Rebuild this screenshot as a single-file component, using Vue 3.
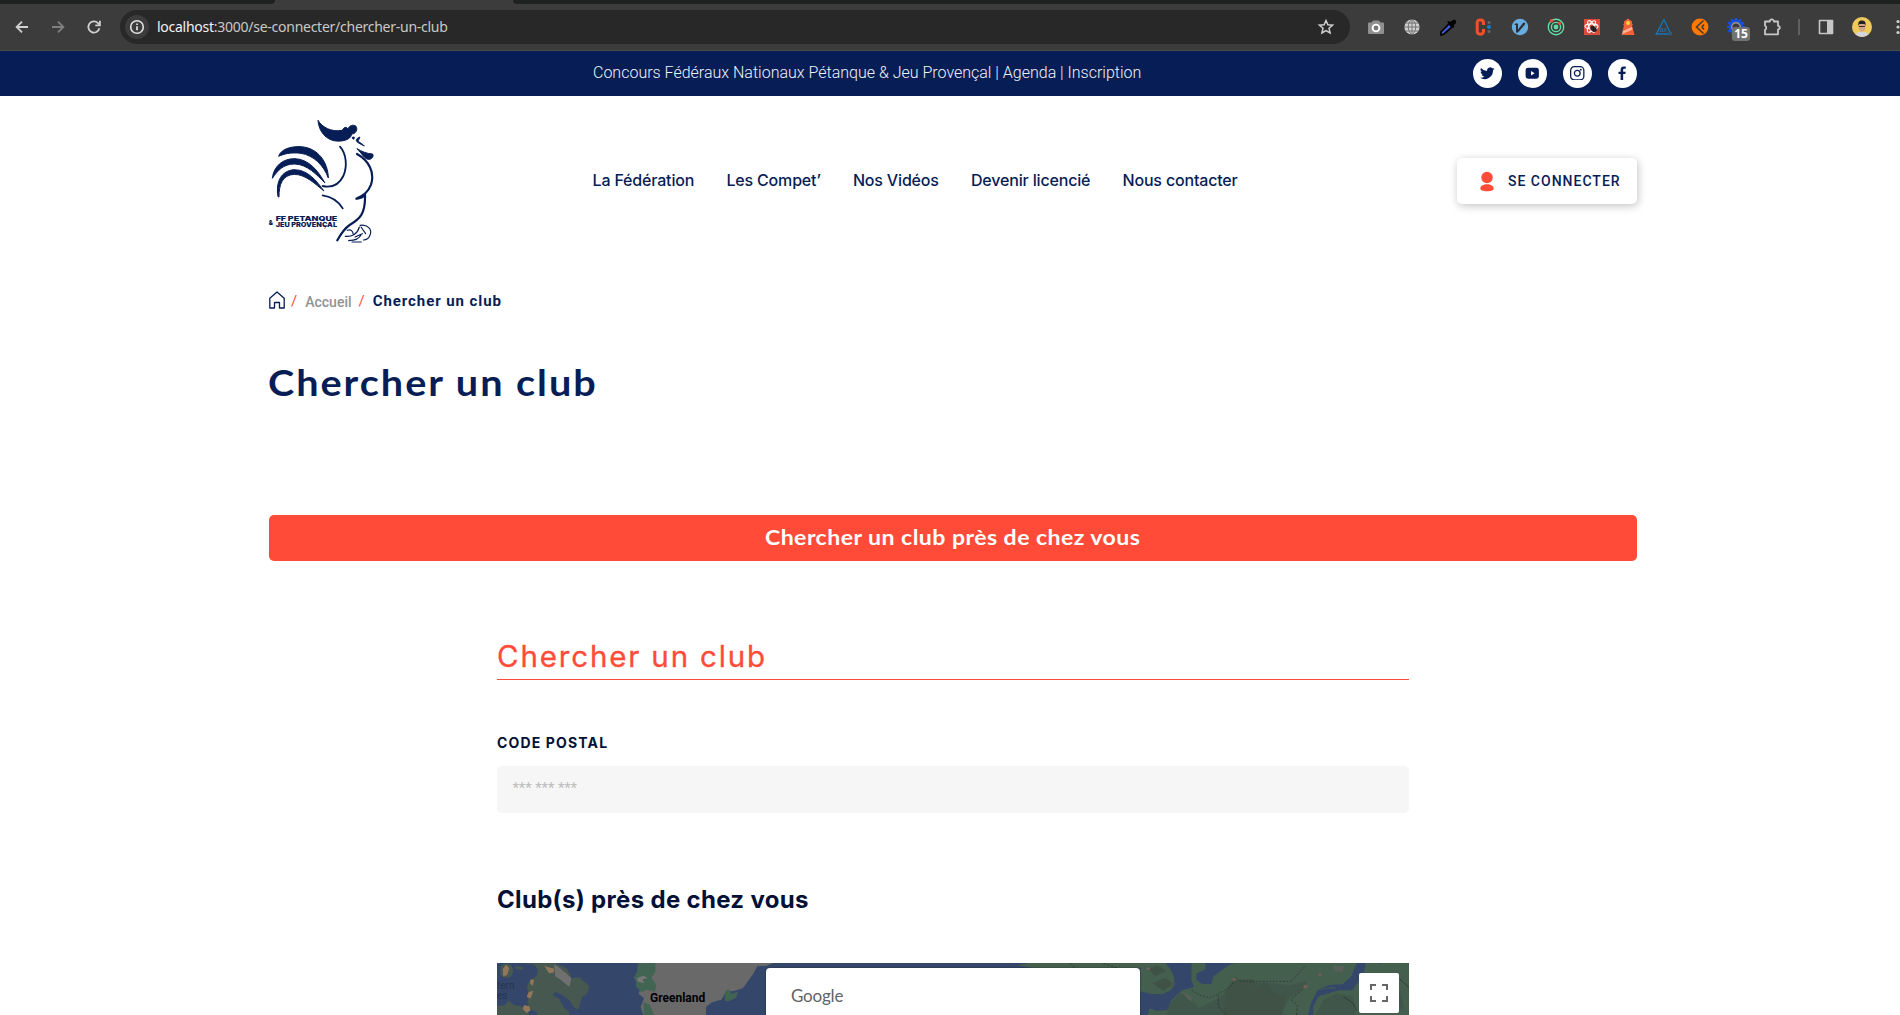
<script setup>
const nav = ['La Fédération', 'Les Compet’', 'Nos Vidéos', 'Devenir licencié', 'Nous contacter']
const teeth = Array.from({ length: 12 }, (_, i) => i * 30)
</script>

<template>
  <div class="window">
    <div class="chrome">
      <div class="tabs"><span class="strip left"></span><span class="strip right"></span></div>
      <div class="toolbar">
        <div class="navs">
          <svg width="16" height="16" viewBox="0 0 16 16" class="line"><path d="M14 8H3M8 2.6 2.6 8 8 13.4" /></svg>
          <svg width="16" height="16" viewBox="0 0 16 16" class="line dim"><path d="M2 8h11M8 2.6 13.4 8 8 13.4" /></svg>
          <svg width="16" height="16" viewBox="0 0 16 16" class="line"><path d="M13.4 9.2A5.6 5.6 0 1 1 12 4.1l1.6 1.6" /><path d="M13.9 1.8v4.6H9.3" /></svg>
        </div>
        <div class="omnibox">
          <span class="info">
            <svg width="16" height="16" viewBox="0 0 16 16"><circle cx="8" cy="8" r="6.3" fill="none" stroke="#e3e3e3" stroke-width="1.6" /><path d="M8 7.3v4M8 4.4v1.6" stroke="#e3e3e3" stroke-width="1.7" /></svg>
          </span>
          <span class="url"><b>localhost</b>:3000/se-connecter/chercher-un-club</span>
          <svg class="star" width="18" height="18" viewBox="0 0 18 18"><path d="m9 2.500 1.900 4.300 4.700.4-3.600 3.100 1.100 4.600L9 12.500l-4.100 2.400L6 10.300 2.400 7.200l4.700-.4z" fill="none" stroke="#d0d0d0" stroke-width="1.500" stroke-linejoin="miter" /></svg>
        </div>
        <div class="extensions">
          <svg viewBox="0 0 18 18"><path d="M2 4.500h2.500L6 2.500h6l1.500 2H16a1 1 0 0 1 1 1V15a1 1 0 0 1-1 1H2a1 1 0 0 1-1-1V5.500a1 1 0 0 1 1-1z" fill="#909090" /><circle cx="9" cy="10" r="3.400" fill="#777" stroke="#fff" stroke-width="1.900" /></svg>
          <svg viewBox="0 0 18 18"><circle cx="9" cy="9" r="7.600" fill="#cfcfcf" /><path d="M9 1v16M1 9h16M2.500 5h13M2.500 13h13M9 1.200c-5 4-5 11.600 0 15.600M9 1.200c5 4 5 11.600 0 15.600" fill="none" stroke="#606060" stroke-width=".8" /></svg>
          <svg viewBox="0 0 18 18"><path d="M2 17v-3L10 6l3 3-8 7z" fill="#405ce0" stroke="#000" stroke-width="1.700" /><path d="m8 4 6 6 1.500-1.500-1-1L17 5c1-2.500-1.500-4-3-3l-3 2-1-1z" /></svg>
          <svg viewBox="0 0 18 18"><path d="M8.500 7V4.500C8.500 1 2.200 1 2.200 4.500v9c0 3.500 6.300 3.500 6.300 0V11" fill="none" stroke="#f25026" stroke-width="3" /><circle cx="14" cy="4.500" r="1.500" fill="#666" /><circle cx="14" cy="9" r="2" fill="#157cca" /><circle cx="14" cy="13.500" r="1.500" fill="#666" /></svg>
          <svg viewBox="0 0 18 18"><circle cx="9" cy="9" r="8.200" fill="#68aee0" /><path d="M4 5.500h3v6l5-6.500c2-1.500 3 .5 1.500 2L7 14.500H5V7H3.500z" fill="#303030" /></svg>
          <svg viewBox="0 0 18 18"><g fill="none" stroke="#61dca3" stroke-width="1.400"><circle cx="9" cy="9" r="7.700" /><circle cx="9" cy="9" r="4.600" /></g><circle cx="9" cy="9" r="2.400" fill="#61dca3" /><circle cx="4.500" cy="2.800" r="1.800" fill="#f25026" /><circle cx="12.500" cy="5.200" r="1.500" fill="#f25026" /></svg>
          <svg viewBox="0 0 18 18"><path d="M1 1h16v16H1z" fill="#dd4b39" /><g fill="none" stroke="#fff" stroke-width="1.100"><ellipse cx="8.500" cy="8.500" rx="6.500" ry="2.600" /><ellipse cx="8.500" cy="8.500" rx="6.500" ry="2.600" transform="rotate(60 8.500 8.500)" /><ellipse cx="8.500" cy="8.500" rx="6.500" ry="2.600" transform="rotate(120 8.500 8.500)" /></g><ellipse cx="10.500" cy="11" rx="2.600" ry="3.600" fill="#222" transform="rotate(-45 10.500 11)" /></svg>
          <svg viewBox="0 0 18 18"><path d="M5 5.500V3.500L9 .5l4 3v2l1 1-1 1 2.500 9.500h-13L5 7.500l-1-1z" fill="#f4623a" /><path d="m4 13 9-4 .5 2.500L3.500 16z" fill="#ffb49c" /><circle cx="9" cy="5" r="1.900" fill="#ffd83d" /></svg>
          <svg viewBox="0 0 18 18"><path d="m9 1.500 6 13M9 1.500 1.200 16h12.500" fill="none" stroke="#1776b8" stroke-width="1.300" /><circle cx="15.500" cy="15.500" r="1.300" fill="none" stroke="#1776b8" /><text x="4.700" y="13.500" class="axe">ax</text></svg>
          <svg viewBox="0 0 18 18"><circle cx="9" cy="9" r="8.400" fill="#ff7800" /><path d="M12.500 2.500 5.500 9l7 6.500M13 6.500 11 9l2 2.500" fill="none" stroke="#3c3c3c" stroke-width="1.500" /></svg>
          <span class="gear">
            <svg viewBox="0 0 18 18"><rect v-for="a in teeth" :key="a" x="7.900" y="0" width="2.200" height="3" fill="#1450f0" :transform="`rotate(${a} 9 9)`" /><circle cx="9" cy="9" r="6.300" fill="none" stroke="#1450f0" stroke-width="2" /><circle cx="9" cy="9" r="4.300" fill="#3c3c3c" stroke="#9a9a9a" stroke-width="1.400" /></svg>
            <em>15</em>
          </span>
          <svg viewBox="0 0 18 18"><path d="M2 3.500h4.800a2.100 2.100 0 0 1 4.200 0h4v4.300a1.700 1.700 0 0 1 0 3.600v4.900H2v-4.500a2.200 2.200 0 0 0 0-4z" fill="none" stroke="#c7c7c7" stroke-width="1.800" stroke-linejoin="round" /></svg>
          <i class="sep"></i>
          <svg viewBox="0 0 18 18"><path d="M2.500 2.500h13v13h-13z" fill="none" stroke="#c7c7c7" stroke-width="1.600" stroke-linejoin="round" /><path d="M10 2h6v14h-6z" fill="#c7c7c7" /></svg>
          <svg class="avatar" viewBox="0 0 20 20"><circle cx="10" cy="10" r="10" fill="#efc959" /><path d="M3.500 17.600c1-2.600 4-3.200 6.500-3.200s5.500.6 6.500 3.200a10 10 0 0 1-13 0z" fill="#d5d5da" /><ellipse cx="10" cy="10" rx="3.300" ry="4.600" fill="#d9a483" /><path d="M6.500 9c-.8-4.500 1-5.800 3.700-5.600C13.500 3.500 14 6 13.400 9l-.8-2H7.300z" fill="#222" /><path d="M7 9.500h6" stroke="#333" /></svg>
          <svg viewBox="0 0 18 18"><g fill="#d0d0d0"><circle cx="9" cy="3.500" r="1.600" /><circle cx="9" cy="9" r="1.600" /><circle cx="9" cy="14.500" r="1.600" /></g></svg>
        </div>
      </div>
    </div>

    <div class="topbar">
      <p>Concours Fédéraux Nationaux Pétanque &amp; Jeu Provençal | Agenda | Inscription</p>
      <div class="social">
        <a><svg viewBox="0 0 24 24"><path d="M24 4.600a9.800 9.800 0 0 1-2.800.8 5 5 0 0 0 2.200-2.700c-1 .6-2 1-3.100 1.200a4.900 4.900 0 0 0-8.400 4.500A14 14 0 0 1 1.700 3.200a4.900 4.900 0 0 0 1.500 6.500 4.900 4.900 0 0 1-2.200-.6c0 2.300 1.600 4.400 3.900 4.900a5 5 0 0 1-2.200.1 4.900 4.900 0 0 0 4.600 3.400A9.900 9.900 0 0 1 0 19.500 14 14 0 0 0 21.500 7.100c1-.7 1.800-1.500 2.500-2.500z" /></svg></a>
        <a><svg viewBox="0 0 24 24"><path fill-rule="evenodd" d="M5 3h14a4 4 0 0 1 4 4v10a4 4 0 0 1-4 4H5a4 4 0 0 1-4-4V7a4 4 0 0 1 4-4zm5 5.200v7.600l6-3.800z" /></svg></a>
        <a><svg viewBox="0 0 24 24"><g fill="none" stroke="#071d55" stroke-width="2.100"><rect x="1.100" y="1.100" width="21.800" height="21.800" rx="6" /><circle cx="12" cy="12" r="4.700" /></g><circle cx="18" cy="6" r="1.500" /></svg></a>
        <a><svg viewBox="0 0 24 24"><path d="M9.300 23v-9.800H5.800V9.500h3.500V6.300C9.300 2.800 11.300 1 14.500 1h3.300v3.700h-2.200c-1.600 0-2.100.8-2.100 2.100v2.700h4.200l-.6 3.700h-3.600V23z" /></svg></a>
      </div>
    </div>

    <header class="header">
      <svg class="logo" viewBox="39 39 321 378">
        <g fill="#071d55" stroke="#071d55" stroke-width="3" stroke-linejoin="round">
          <path d="M189 46c12 20 38 36 73 30 4-10 13-12 17-4 3-10 16-15 24-8 6 9 0 23-13 23-2 13-15 19-32 21-40 4-66-24-69-62z" />
          <path d="M295 96a3 3 0 1 0 .1 0zM314 96c-11 5-13 11-6 16s14 8 20 11c-8-9-20-12-18-17 2-4 5-6 4-10z" />
          <path d="M306 131c14 8 28 15 47 16 4 8-3 16-11 16-14 0-18-14-36-32z" />
          <path d="M71 154c6-20 34-31 68-29 50 4 80 46 81 94-14-38-44-68-82-74-32-4-52 2-67 9z" />
          <path d="M52 220c4-37 32-60 68-59 42 2 69 36 90 73-24-24-53-56-91-57-35 0-51 20-67 43z" />
          <path d="M69 275c-8-48 12-78 48-81 42 0 68 34 90 64-26-20-53-49-89-50-36 2-46 30-46 68z" />
        </g>
        <g fill="none" stroke="#071d55" stroke-linecap="round">
          <path d="M255 125c20 22 22 60 10 88-12 24-34 36-62 30M203 271c25 4 48 18 60 39" stroke-width="5.500" />
          <path d="M306 147c36 20 54 56 42 92-8 22-22 32-46 43 14-2 24-4 28-14 2 60-16 74-46 92-18 12-26 26-37 46" stroke-width="6.500" />
          <path d="M315 361c22-4 38 12 30 30-4 10-12 14-20 14M277 376c8-4 16 0 18 12M271 394c20 2 37-8 42-28M281 407c14 0 32-5 38-19M291 411h28M300 396l22-10M318 366l14 20" stroke-width="3.500" />
        </g>
        <text x="62" y="348" textLength="185" lengthAdjust="spacingAndGlyphs" class="lt">FF PETANQUE</text>
        <text x="41" y="359" class="amp">&amp;</text>
        <text x="62" y="367" textLength="184" lengthAdjust="spacingAndGlyphs" class="lt">JEU PROVENÇAL</text>
      </svg>
      <nav><a v-for="n in nav" :key="n">{{ n }}</a></nav>
      <button class="login">
        <svg width="14" height="21" viewBox="0 0 14 21"><circle cx="7" cy="6.500" r="5.700" fill="#ff4b37" /><path d="M.3 17.300c0-2.200 3-4 6.700-4s6.700 1.800 6.700 4-3 3-6.700 3-6.700-.8-6.700-3z" fill="#ff4b37" /></svg>
        SE CONNECTER
      </button>
    </header>

    <main>
      <div class="breadcrumb">
        <svg width="16" height="18" viewBox="0 0 16 18"><path d="M.8 17V7.200L8 .9l7.200 6.300V17h-4.700v-5.500h-5V17z" fill="none" stroke="#071d55" stroke-width="1.300" stroke-linejoin="round" /></svg>
        <i>/</i><a>Accueil</a><i>/</i><strong>Chercher un club</strong>
      </div>
      <h1><span>Chercher un club</span></h1>
      <div class="banner"><span>Chercher un club près de chez vous</span></div>

      <section class="form">
        <h2>Chercher un club</h2>
        <label>CODE POSTAL</label>
        <div class="field">*** *** ***</div>
        <h3>Club(s) près de chez vous</h3>
        <div class="map">
          <svg width="912" height="52" viewBox="0 0 912 52">
            <path d="M0 0h912v52H0z" fill="#34476a" />
            <g transform="scale(.33333) translate(-51 -279)">
              <g fill="#46584f">
                <path d="M62 290c8-12 22-10 32-4 8 12 6 28-4 36-12 4-26 0-30-14zM105 288l24 4-2 8-20-4z" />
                <path d="M133 279h92l35 16 15 30 22-4 32 28-8 22-15 10-6 24-6 14-14-8-10-18-24-18-20-10-8 10 20 12 14 26 16 14-2 22h-86l-10-22-24-12-4-18 6-24-8-22 10-20 20-14 4-18-10-14-14-4z" />
                <path d="M51 409l24-4 10-14 18 14 40 8 4 22H51z" />
              </g>
              <g fill="#92765a"><path d="M68 298l10-14 10 10-6 20-12 6zM193 288l30 8-2 12-14 2zM152 328l10 2-4 18-8-8zM146 366l14-4-8 24-12-6zM132 405l16 4 4 12-12 8-12-12z" /></g>
              <path d="M222 283l16 10 24 20 12 12-6 26-24-20-18-12-2-20z" fill="#707070" />
              <path d="M490 279h390l-20 8-28 2-12 22-20 28-12 16-26 8-24 2-14 24-28 8-18 14v24H490l-8-24 10-26-16-14 14-40z" fill="#696969" />
              <path d="M474 279h52v28l-12 16 15 22-4 20-24-6-16 8-18-18 2-12-8-14 10-16zM735 365l10-8 10 14 18-6-4 18-22 10h-12zM491 396l18 8 14 31h-32z" fill="#426553" />
              <path d="m470 325 20-8 14 8-16 2 4 12-18-4z" fill="#777" />
            </g>
            <g transform="translate(443 0) scale(.33333) translate(0 -69)">
              <path d="M232 76l34-7h410l16 20 10 22 2 22-12 18-24 12-35-1-32-8V84H280z" fill="#455f4f" />
              <path d="M755 69h40l2 18-28 14 0 18 16 12 28 2 8-24 40-30 20-10h369l-6 42-24 22-4 18-40-6-42 4-20 38-10 38H624l4-20 24 8 34-4 6-26 34-32 36-10-8-20z" fill="#455f4f" />
              <path d="M1276 69h40v34l-40-6zM1324 69h83v156h-287v-26l16-30 46-14 46-14 30-50z" fill="#455f4f" />
              <path d="M682 202l34-40 30 2 30 40 62-30 50-52 94 6 70 8 50-14-10 22-42 30-30 51H682zM1150 180l40-20 50 10 6 55h-120zM1320 140l60 14 12 50-40 14-40-6z" fill="#40554a" opacity=".85" />
              <path d="m860 145 20-24 60-4 8 32 28-26 30 40 32 4-12 58H850zM624 86l30-10 24 18-32 14zM636 130l40-16 24 18-30 20z" fill="#3f5245" />
              <path d="M1250 69h24l-2 36-18 22-18 24-40 0-16-10-42 6 30-12 40-2 26-24z" fill="#34476a" />
              <g fill="none" stroke="#2b382f" stroke-width="2.500"><path d="M755 150l24 16 30 8 60-30 20-32 10 12h155l40-44" stroke-dasharray="5 5" /><path d="M835 165v34l24 26M1070 225l2-30-20-16 42-36M390 69l14 14M490 70l40 14" stroke-dasharray="7 5" /><path d="M1210 170l30 20 10 22M1378 115l29 28" /></g>
              <g fill="#775f58"><path d="M620 83h10v6h-10zM878 115h9v7h-9zM1136 101h8v8h-8zM1092 135l12 2-4 9-10-2z" /></g>
              <path d="M725 155l24 10 10 20-16-8zM1180 77l32 2-4 18-26-4z" fill="#59605a" />
            </g>
          </svg>
          <span class="region"><span>tern</span><span>es</span></span>
          <span class="country">Greenland</span>
          <div class="dialog">Google</div>
          <div class="fullscreen"><svg width="18" height="18" viewBox="0 0 18 18"><path d="M1 6V1h5M12 1h5v5M17 12v5h-5M6 17H1v-5" fill="none" stroke="#666" stroke-width="2" /></svg></div>
        </div>
      </section>
    </main>
  </div>
</template>

<style>
body { background: #fff; overflow: hidden; }
</style>

<style scoped>
.window { width: 1900px; height: 1015px; overflow: hidden; font-family: Roboto, sans-serif; color: #071d55; }
.chrome { height: 50px; background: #3c3c3c; border-bottom: 1px solid #494b46; overflow: hidden; }
.tabs { height: 4px; display: flex; justify-content: space-between; }
.strip { background: #1f2120; }
.strip.left { width: 275px; border-radius: 0 0 6px 0; }
.strip.right { width: 1387px; border-radius: 0 0 0 6px; }
.toolbar { height: 46px; display: flex; align-items: center; }
.navs { flex: none; width: 106px; padding-left: 14px; display: flex; gap: 20px; }
.line { fill: none; stroke: #d0d0d0; stroke-width: 1.800; }
.dim { stroke: #808080; }
.omnibox { flex: none; width: 1230px; height: 34px; border-radius: 17px; background: #282828; display: flex; align-items: center; }
.info { width: 24px; height: 24px; margin-left: 5px; border-radius: 50%; background: #3c3c3c; display: flex; align-items: center; justify-content: center; }
.url { margin-left: 8px; padding-bottom: 2px; font: 14px 'Noto Sans', sans-serif; letter-spacing: -.26px; color: #c8c8c8; }
.url b { font-weight: 400; color: #f2f2f2; }
.star { margin-left: auto; margin-right: 15px; }
.extensions { flex: none; margin-left: 17px; display: flex; align-items: center; gap: 18px; }
.extensions svg { flex: none; width: 18px; height: 18px; display: block; }
.extensions .avatar { width: 20px; height: 20px; margin: 0 -1px; }
.axe { font: 7px 'Liberation Sans', sans-serif; fill: #1776b8; }
.sep { width: 2px; height: 16px; margin: 0 -1px 0 -1px; background: #606060; }
.gear { position: relative; }
.gear em { position: absolute; left: 5px; top: 9px; width: 18px; height: 14px; border-radius: 3px; background: #717473; color: #fff; font: 700 12px/14px 'Noto Sans', sans-serif; text-align: center; }
.topbar { height: 45px; background: #071d55; display: flex; align-items: center; }
.topbar p { width: 880px; margin: 0 0 0 593px; font-weight: 300; font-size: 16px; line-height: 20px; color: #f1f3f8; padding-bottom: 1px; }
.social { display: flex; gap: 16px; }
.social a { width: 29px; height: 29px; border-radius: 50%; background: #fff; display: flex; align-items: center; justify-content: center; }
.social svg { width: 14.500px; height: 14.500px; fill: #071d55; margin-bottom: 1px; }
.header { height: 170px; margin-left: 268px; width: 1369px; display: flex; align-items: center; }
.logo { width: 107px; height: 126px; }
.lt { font: 900 19px Inter, sans-serif; fill: #071d55; }
.amp { font: 900 18px Inter, sans-serif; fill: #071d55; }
nav { margin-left: 217.500px; display: flex; gap: 32.200px; font: 500 16px/20px Inter, sans-serif; letter-spacing: -.17px; padding-bottom: 3px; }
.login { margin: 0 0 0 auto; width: 180px; height: 46px; padding: 0 16px 0 23px; border: 0; border-radius: 5px; background: #fff; box-shadow: 1px 2px 8px rgba(0,0,0,.24); display: flex; align-items: center; gap: 14px; font: 500 14px Roboto, sans-serif; letter-spacing: 1px; color: #071d55; white-space: nowrap; }
.login svg { flex: none; margin-top: 1px; }
main { width: 1368px; margin-left: 269px; }
.breadcrumb { height: 24px; padding-top: 22px; display: flex; align-items: center; font-size: 14px; }
.breadcrumb i { font-style: normal; font-size: 15px; color: #ff4b37; margin: 2px 8px 0 7px; }
.breadcrumb svg { margin: 0 -1px 1px 0; }
.breadcrumb a { font-weight: 500; color: #929292; margin-top: 4px; }
.breadcrumb strong { font-size: 15px; font-weight: 700; letter-spacing: .92px; margin-top: 2px; }
h1 { margin: 48px 0 0 -1px; height: 45px; font: 700 36px/45px Lato, sans-serif; letter-spacing: 1.800px; }
h1 span, .banner span { display: inline-block; transform: scaleX(1.1); transform-origin: left; }
.banner { margin-top: 110px; height: 46px; border-radius: 5px; background: #ff4b37; color: #fff; text-align: center; font: 700 21px/44px Lato, sans-serif; letter-spacing: .4px; }
.banner span { transform-origin: center; }
.form { width: 912px; margin-left: 228px; color: #021135; }
h2 { margin: 71px 0 0; height: 47px; border-bottom: 1px solid #ff4b37; font: 400 29.500px/49px Inter, sans-serif; letter-spacing: 1.850px; color: #ff4b37; -webkit-text-stroke: .3px #ff4b37; }
label { display: block; margin-top: 53px; font: 700 14px/20px Inter, sans-serif; letter-spacing: 1.150px; }
.field { margin-top: 13px; height: 47px; padding-left: 15.500px; border-radius: 5px; background: #f6f6f6; color: #bdbdbd; font: 400 15px/44px Roboto, sans-serif; letter-spacing: -.1px; }
h3 { margin: 72px 0 48px; font: 700 24px/30px Inter, sans-serif; letter-spacing: .32px; }
.map { position: relative; height: 52px; overflow: hidden; }
.map > svg { display: block; }
.region { position: absolute; left: 0; top: 18px; display: flex; flex-direction: column; font: 10px/10px Roboto, sans-serif; color: #26344f; }
.country { position: absolute; left: 153px; top: 28px; font: 700 12px/14px Roboto, sans-serif; color: #000; }
.dialog { position: absolute; left: 269px; top: 5px; width: 374px; height: 60px; box-sizing: border-box; padding-left: 25px; border-radius: 4px; background: #fff; font: 400 17px/55px Lato, sans-serif; letter-spacing: -.2px; color: #5f6368; box-shadow: 0 0 2px rgba(0,0,0,.5); }
.fullscreen { position: absolute; left: 862px; top: 10px; width: 40px; height: 40px; border-radius: 2px; background: #fff; display: flex; align-items: center; justify-content: center; }
</style>
